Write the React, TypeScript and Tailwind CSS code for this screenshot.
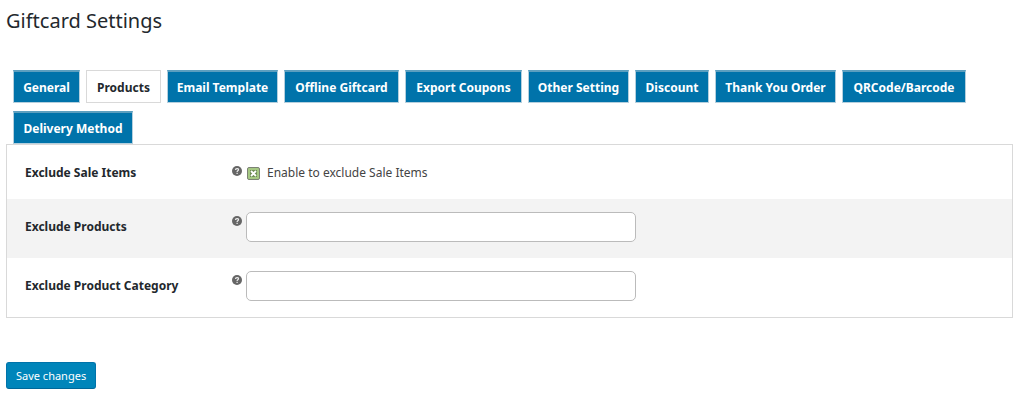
import { useState } from "react";

const tabs = [
  { name: "General", width: "min-w-[67px]" },
  { name: "Products", width: "min-w-[75px]" },
  { name: "Email Template", width: "min-w-[111px]" },
  { name: "Offline Giftcard", width: "min-w-[115px]" },
  { name: "Export Coupons", width: "min-w-[117px]" },
  { name: "Other Setting", width: "min-w-[101px]" },
  { name: "Discount", width: "min-w-[74px]" },
  { name: "Thank You Order", width: "min-w-[121px]" },
  { name: "QRCode/Barcode", width: "min-w-[124px]" },
  { name: "Delivery Method", width: "min-w-[120px]" },
];

function HelpTip() {
  return (
    <svg viewBox="0 0 10 10" className="size-[10px] shrink-0" role="img" aria-label="Help">
      <circle cx="5" cy="5" r="5" fill="#666" />
      <path d="M3.5 3.9C3.5 2.1 6.5 2.1 6.5 3.8C6.5 4.9 5.1 4.8 5.1 6" fill="none" stroke="#eee" strokeWidth="1.2" />
      <rect x="4.5" y="6.8" width="1.2" height="1.2" fill="#eee" />
    </svg>
  );
}

function TextRow({ id, label, shade }: { id: string; label: string; shade: string }) {
  return (
    <div className={`flex h-[59px] items-center pb-[3px] pl-[18px] ${shade}`}>
      <label htmlFor={id} className="w-[207px] shrink-0 text-[12px] font-bold text-[#23282d]">
        {label}
      </label>
      <div className="flex min-w-0 flex-1 gap-1 pr-4">
        <div className="pt-1">
          <HelpTip />
        </div>
        <input
          id={id}
          type="text"
          className="h-[30px] w-full max-w-[390px] rounded-[5px] border border-[#bbb] bg-white px-2 text-[13px]"
        />
      </div>
    </div>
  );
}

export default function App() {
  const [active, setActive] = useState("Products");
  const [exclude, setExclude] = useState(true);

  return (
    <main className="bg-white pr-[11px] pb-4 pl-[6px] font-['Noto_Sans','Open_Sans',sans-serif] text-[#23282d]">
      <h1 className="pt-[6px] text-[20px] leading-[30px]">Giftcard Settings</h1>
      <nav className="mt-[34px] flex flex-wrap gap-x-[6px] gap-y-2 pl-[7px]">
        {tabs.map((tab) => (
          <a
            key={tab.name}
            href="#"
            onClick={(e) => {
              e.preventDefault();
              setActive(tab.name);
            }}
            className={`flex h-[33px] items-center justify-center border px-1 pt-[2px] text-[12px] font-bold whitespace-nowrap ${tab.width} ${
              active === tab.name
                ? "border-[#d9d9d9] bg-white text-[#23282d]"
                : "border-[#b5cfdd] border-t-2 border-t-[#5c9fbf] bg-[#0073aa] text-white"
            }`}
          >
            {tab.name}
          </a>
        ))}
      </nav>
      <form onSubmit={(e) => e.preventDefault()}>
        <section className="border border-[#d9d9d9]">
          <div className="flex h-[54px] items-center pt-[2px] pl-[18px]">
            <label htmlFor="sale" className="w-[207px] shrink-0 text-[12px] font-bold">
              Exclude Sale Items
            </label>
            <div className="flex items-center gap-[5px]">
              <div className="pb-[5px]">
                <HelpTip />
              </div>
              <label className="flex items-center gap-[7px] text-[12px] text-[#444]">
                <span className="grid size-[13px] place-items-center">
                  <input
                    id="sale"
                    type="checkbox"
                    checked={exclude}
                    onChange={(e) => setExclude(e.target.checked)}
                    className="col-start-1 row-start-1 size-[13px] appearance-none rounded-[2px] border border-[#7c8274] bg-white checked:bg-[#a5c882]"
                  />
                  {exclude && (
                    <svg viewBox="0 0 13 13" className="pointer-events-none col-start-1 row-start-1 size-[13px]">
                      <rect x="3" y="3" width="7" height="7" fill="#6f8d55" />
                      <path d="M4 4L9 9M9 4L4 9" stroke="#fff" strokeWidth="1.8" />
                    </svg>
                  )}
                </span>
                Enable to exclude Sale Items
              </label>
            </div>
          </div>
          <TextRow id="products" label="Exclude Products" shade="bg-[#f3f3f3]" />
          <TextRow id="category" label="Exclude Product Category" shade="bg-white" />
        </section>
        <button
          type="submit"
          className="mt-[44px] h-[27px] rounded-[3px] border border-[#0073aa] border-b-[#006799] bg-[#0085ba] px-[9px] text-[11px] leading-none text-white"
        >
          Save changes
        </button>
      </form>
    </main>
  );
}
